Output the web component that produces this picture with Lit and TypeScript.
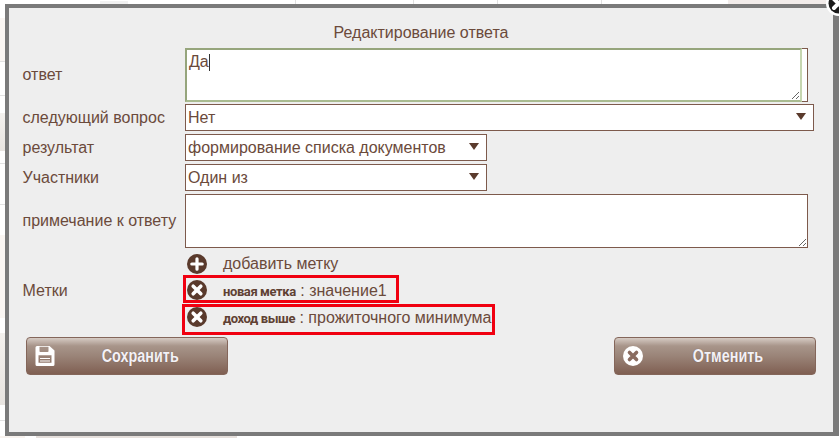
import { LitElement, html, css, svg } from "lit";
import { customElement } from "lit/decorators.js";

const xIcon = (bg: string, fg: string) => svg`<svg class="ic" viewBox="0 0 20 20"><circle cx="10" cy="10" r="10" fill="${bg}"/><path d="M6.200 6.200 13.800 13.800M13.800 6.200 6.200 13.800" stroke="${fg}" stroke-width="3.600" stroke-linecap="round"/></svg>`;
const plusIcon = svg`<svg class="ic" viewBox="0 0 20 20"><circle cx="10" cy="10" r="10" fill="#5a3a2c"/><path d="M10 4.800V15.200M4.800 10H15.200" stroke="#fff" stroke-width="3.200" stroke-linecap="round"/></svg>`;
const floppy = svg`<svg class="btn-ic floppy" viewBox="0 0 20 20"><path fill="#fff" fill-rule="evenodd" d="M2 0H14.500L19.500 4.500V18.500Q19.500 20 18 20H2Q.5 20 .5 18.500V1.500Q.5 0 2 0ZM4.500 .8V5.200Q4.500 6 5.300 6H12.700Q13.500 6 13.500 5.200V.8ZM3.500 9.200V16.800H16.500V9.200Z"/><path fill="#fff" d="M5 12H15V13H5Z M5 14.500H15V15.500H5Z"/></svg>`;

@customElement("app-root")
export class AppRoot extends LitElement {
  static styles = css`
    :host {
      display: block;
      position: relative;
      width: 839px;
      height: 438px;
      overflow: hidden;
      background: #fff;
      font-family: "Liberation Sans", Arial, sans-serif;
      color: #6b4a3b;
      font-size: 16px;
    }
    .backdrop { position: absolute; inset: 0; }
    .backdrop i { position: absolute; display: block; }
    .band-a { left: 0; width: 5px; background: #faf6f3; }
    .band-b { left: 0; width: 5px; background: linear-gradient(#f3f1ee, #e8e4e0); }
    .hline { left: 0; width: 5px; height: 1px; background: #e2e2e2; }
    .vline { top: 0; width: 1px; height: 4px; background: #e0e0e0; }
    .pink { top: 0; left: 728px; width: 99px; height: 4px; background: #f2ecea; }
    .ghost { top: 1px; left: 100px; width: 28px; height: 3px; background: #f1f1f1; }
    .foot-a { top: 436px; left: 0; width: 25px; height: 2px; background: #f8f3ef; }
    .foot-b { top: 436px; left: 36px; width: 201px; height: 2px; background: #e6e0dc; }
    .modal {
      position: relative;
      box-sizing: border-box;
      margin: 4px 0 0 5px;
      width: 834px;
      height: 432px;
      border: 4px solid #7a7a7a;
      border-right-width: 6px;
      background: #eeeeee;
    }
    h2 {
      margin: 0;
      height: 40px;
      padding-top: 16px;
      box-sizing: border-box;
      font-size: 16px;
      line-height: 18px;
      font-weight: 400;
      text-align: center;
      color: #6b4a3b;
    }
    .form {
      display: grid;
      grid-template-columns: 162.500px 1fr;
      grid-template-rows: 56px 30px 30px 30px 56px 25px 29px 31px;
      padding-left: 13.500px;
    }
    .lab { line-height: 27px; white-space: nowrap; }
    .lab.tall { line-height: 54px; }
    .lab.mid { line-height: 32px; }
    .field { position: relative; align-self: start; }
    .wide { width: 623px; }
    .mid-w { width: 302px; }
    .full { width: 629px; }
    .box {
      display: block;
      box-sizing: border-box;
      height: 54px;
      width: 100%;
      margin: 0;
      padding: 2px;
      border: 1px solid #7d5a4c;
      background: #fff;
      color: #6b4a3b;
      font: 16px/18px "Liberation Sans", Arial, sans-serif;
      border-radius: 0;
      outline: none;
      resize: both;
    }
    .answer { position: relative; width: 623px; height: 54px; border: 1px solid #7d5a4c; box-sizing: border-box; background: #fff; }
    .answer textarea {
      position: absolute;
      left: -1px;
      top: -1px;
      width: 617px;
      height: 54px;
      box-sizing: border-box;
      margin: 0;
      padding: 3px 2px;
      border: 2px solid;
      border-color: #96a57c #c6d6b0 #a9bb90 #96a57c;
      background: #fff;
      color: #6b4a3b;
      font: 16px/18px "Liberation Sans", Arial, sans-serif;
      outline: none;
      resize: both;
    }
    .caret { position: absolute; left: 23px; top: 5px; width: 1px; height: 17px; background: #333; }
    select {
      display: block;
      box-sizing: border-box;
      width: 100%;
      height: 27px;
      margin: 0;
      padding: 0 0 0 2px;
      appearance: none;
      -webkit-appearance: none;
      border: 1px solid #7d5a4c;
      border-radius: 0;
      background: #fff;
      color: #6b4a3b;
      font: 16px "Liberation Sans", Arial, sans-serif;
      outline: none;
    }
    .arrow {
      position: absolute;
      right: 8px;
      top: 9px;
      width: 0;
      height: 0;
      border-left: 5px solid transparent;
      border-right: 5px solid transparent;
      border-top: 7px solid #5a3a2c;
      pointer-events: none;
    }
    .ic { display: block; width: 20px; height: 20px; flex: none; }
    .add {
      display: flex;
      align-items: center;
      gap: 16px;
      margin-left: 2px;
      padding-top: 2px;
      box-sizing: border-box;
      height: 25px;
      white-space: nowrap;
    }
    .tag {
      display: inline-flex;
      align-items: center;
      box-sizing: border-box;
      gap: 16px;
      border: 3px solid #f00010;
      white-space: nowrap;
      width: max-content;
      justify-self: start;
      align-self: start;
    }
    .tag span { margin-top: 2px; }
    .tag-a { height: 28px; margin-left: -2px; padding: 2px 9px 0 1px; }
    .tag-b { height: 31px; margin-left: -3px; padding: 0 1px 5px 2px; }
    .tag b {
      font-family: Roboto, "Liberation Sans", sans-serif;
      font-size: 13px;
      letter-spacing: -.4px;
      font-weight: 700;
      color: #5f4133;
    }
    .actions {
      display: flex;
      justify-content: space-between;
      padding: 2px 17px 0;
    }
    .btn {
      position: relative;
      display: flex;
      align-items: center;
      justify-content: center;
      box-sizing: border-box;
      width: 202px;
      height: 38px;
      padding: 0 0 0 26px;
      border: 1px solid #84665a;
      border-radius: 4px;
      background: linear-gradient(#d6cbc4 0, #a8958a 22%, #9a8478 50%, #7f5f52 100%);
      color: #f3f1f6;
      font-family: "Liberation Sans", sans-serif;
      font-weight: 700;
      font-size: 18px;
      text-shadow: 0 0 1px rgba(90, 60, 50, .6);
    }
    .btn span { display: inline-block; transform: scaleX(.8); }
    .btn-ic { position: absolute; left: 8px; top: 8px; width: 20px; height: 20px; }
    .close {
      position: absolute;
      left: 825.500px;
      top: -9.500px;
      width: 25px;
      height: 25px;
      padding: 0;
      border: none;
      background: none;
    }
    .close svg { display: block; }
  `;

  render() {
    const bands: [string, number, number][] = [
      ["band-a", 18, 43], ["band-b", 113, 38], ["band-a", 235, 83], ["band-b", 333, 72],
    ];
    return html`
      <div class="backdrop" aria-hidden="true">
        ${bands.map(([c, t, h]) => html`<i class=${c} style="top:${t}px;height:${h}px"></i>`)}
        ${[61, 95, 163, 204, 420].map((t) => html`<i class="hline" style="top:${t}px"></i>`)}
        ${[295, 413, 497, 601].map((l) => html`<i class="vline" style="left:${l}px"></i>`)}
        <i class="pink"></i><i class="ghost"></i>
        <i class="foot-a"></i><i class="foot-b"></i>
      </div>
      <div class="modal">
        <h2>Редактирование ответа</h2>
        <div class="form">
          <label class="lab tall">ответ</label>
          <div class="field answer"><textarea>Да</textarea><span class="caret"></span></div>

          <label class="lab">следующий вопрос</label>
          <div class="field full"><select><option>Нет</option></select><span class="arrow"></span></div>

          <label class="lab">результат</label>
          <div class="field mid-w"><select><option>формирование списка документов</option></select><span class="arrow"></span></div>

          <label class="lab">Участники</label>
          <div class="field mid-w"><select><option>Один из</option></select><span class="arrow"></span></div>

          <label class="lab tall">примечание к ответу</label>
          <div class="field wide"><textarea class="box"></textarea></div>

          <span></span>
          <div class="add">${plusIcon}<span>добавить метку</span></div>

          <label class="lab mid">Метки</label>
          <div class="tag tag-a">${xIcon("#5a3a2c", "#fff")}<span><b>новая метка</b> : значение1</span></div>

          <span></span>
          <div class="tag tag-b">${xIcon("#5a3a2c", "#fff")}<span><b>доход выше</b> : прожиточного минимума</span></div>
        </div>
        <div class="actions">
          <button class="btn">${floppy}<span>Сохранить</span></button>
          <button class="btn"><svg class="btn-ic" viewBox="0 0 20 20"><circle cx="10" cy="10" r="10" fill="#fff"/><path d="M6.500 6.500 13.500 13.500M13.500 6.500 6.500 13.500" stroke="#8a6c60" stroke-width="3.600" stroke-linecap="round"/></svg><span>Отменить</span></button>
        </div>
      </div>
      <button class="close" aria-label="Закрыть">
        <svg width="25" height="25" viewBox="0 0 25 25"><circle cx="12.500" cy="12.500" r="12.500" fill="#fff"/><circle cx="12.500" cy="12.500" r="10" fill="#1a1a1a"/><path d="M8 8 17 17M17 8 8 17" stroke="#fff" stroke-width="4" stroke-linecap="round"/></svg>
      </button>
    `;
  }
}
